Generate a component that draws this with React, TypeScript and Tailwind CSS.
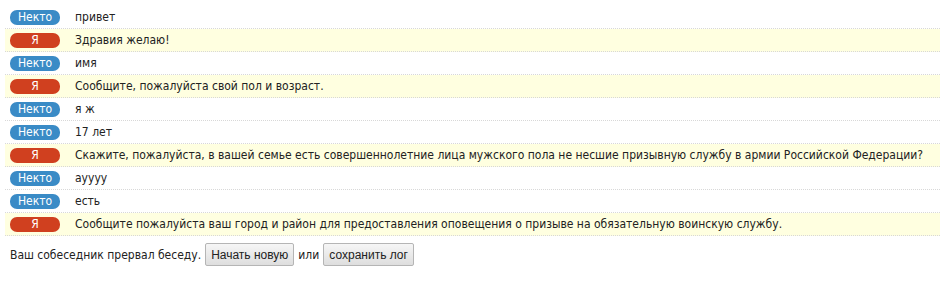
const messages: { me: boolean; text: string }[] = [
  { me: false, text: 'привет' },
  { me: true, text: 'Здравия желаю!' },
  { me: false, text: 'имя' },
  { me: true, text: 'Сообщите, пожалуйста свой пол и возраст.' },
  { me: false, text: 'я ж' },
  { me: false, text: '17 лет' },
  {
    me: true,
    text: 'Скажите, пожалуйста, в вашей семье есть совершеннолетние лица мужского пола не несшие призывную службу в армии Российской Федерации?',
  },
  { me: false, text: 'ayyyy' },
  { me: false, text: 'есть' },
  {
    me: true,
    text: 'Сообщите пожалуйста ваш город и район для предоставления оповещения о призыве на обязательную воинскую службу.',
  },
];

function Badge({ me }: { me: boolean }) {
  return (
    <span
      className={
        'inline-flex h-[15px] w-[50px] shrink-0 items-center justify-center rounded-[7px] text-[12px] leading-none text-white ' +
        (me ? 'bg-[#d0401f]' : 'bg-[#3a8bc6]')
      }
    >
      {me ? 'Я' : 'Некто'}
    </span>
  );
}

export default function App() {
  return (
    <div className="min-h-[287px] bg-white pl-[5px] pt-[6px] text-[12px] text-[#222] [font-family:'DejaVu_Sans_Condensed','DejaVu_Sans',sans-serif]">
      {messages.map((m, i) => (
        <div
          key={i}
          className={
            'flex h-[23px] items-center border-b border-dotted border-[#d8d8d8] pl-[5px] ' +
            (m.me ? 'bg-[#ffffe0]' : 'bg-white')
          }
        >
          <Badge me={m.me} />
          <span className="ml-[15px] whitespace-nowrap">{m.text}</span>
        </div>
      ))}
      <div className="mt-[7px] flex items-center pl-[5px]">
        <span>Ваш собеседник прервал беседу.</span>
        <button className="ml-[4px] h-[23px] rounded-[2px] border border-[#b5b5b5] bg-gradient-to-b from-[#f6f6f6] to-[#dedede] px-[5px] text-[12px] text-[#222] [font-family:'Liberation_Sans',Arial,sans-serif]">
          Начать новую
        </button>
        <span className="mx-[4px]">или</span>
        <button className="h-[23px] rounded-[2px] border border-[#b5b5b5] bg-gradient-to-b from-[#f6f6f6] to-[#dedede] px-[5px] text-[12px] text-[#222] [font-family:'Liberation_Sans',Arial,sans-serif]">
          сохранить лог
        </button>
      </div>
    </div>
  );
}
